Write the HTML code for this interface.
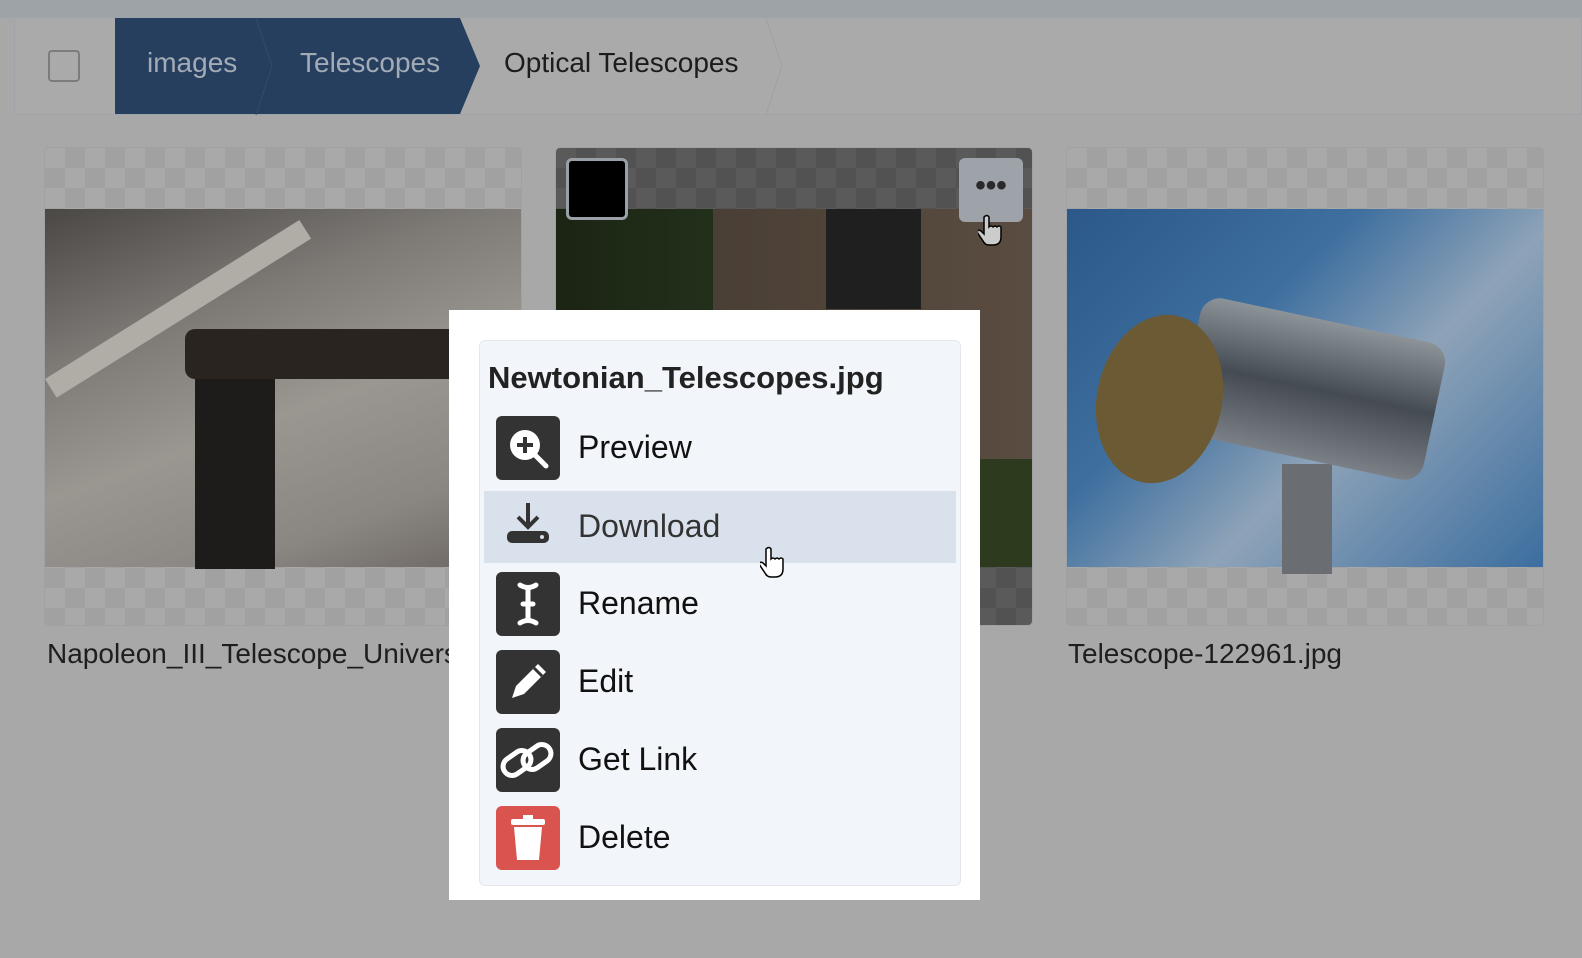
<!DOCTYPE html>
<html><head><meta charset="utf-8"><style>
*{margin:0;padding:0;box-sizing:border-box}
body{width:1582px;height:958px;background:#a8a8a8;font-family:"Liberation Sans",sans-serif;position:relative;overflow:hidden}
.abs{position:absolute}
.top{left:0;top:0;width:1582px;height:18px;background:#9ea3a8}
.bc{left:14px;top:18px;width:1568px;height:97px;border:1px solid #9fa4aa;border-top:none;background:#aaaaaa}
.cb{left:48px;top:50px;width:32px;height:32px;border:2px solid #7c7c7c;border-radius:4px}
.blue{left:115px;top:18px;width:365px;height:96px;background:#273f5f;clip-path:polygon(0 0,345px 0,365px 48px,345px 96px,0 96px)}
.bt{top:47px;font-size:28px;color:#a3abb6}
.card{top:147px;width:478px;height:479px;border:1px solid #9ea2a7;border-radius:5px;overflow:hidden;
background-color:#a9a9a9;background-image:linear-gradient(45deg,#a1a1a1 25%,transparent 25%,transparent 75%,#a1a1a1 75%),linear-gradient(45deg,#a1a1a1 25%,transparent 25%,transparent 75%,#a1a1a1 75%);background-size:40px 40px;background-position:0 0,20px 20px}
.img{position:absolute;left:0;top:61px;width:100%;height:358px}
.fn{top:638px;font-size:28px;color:#1e1e1e}
.pop{left:449px;top:310px;width:531px;height:590px;background:#fff}
.panel{left:479px;top:340px;width:482px;height:546px;background:#f2f5f9;border:1px solid #e4e8ee;border-radius:6px}
.ttl{left:488px;top:360px;font-size:31px;font-weight:bold;color:#222}
.item{left:484px;width:472px;height:72px}
.ic{position:absolute;left:12px;top:4px;width:64px;height:64px;border-radius:6px;background:#333}
.lb{position:absolute;left:94px;top:17px;font-size:32px;color:#111}
</style></head><body>
<div class="abs top"></div>
<div class="abs bc"></div>
<div class="abs cb"></div>
<div class="abs blue"></div>
<svg class="abs" style="left:250px;top:18px" width="30" height="97"><path d="M6 0 L22 48 L6 97" stroke="#334b6b" fill="none"/></svg>
<svg class="abs" style="left:760px;top:18px" width="30" height="97"><path d="M6 0 L22 48 L6 97" stroke="#a0a0a0" fill="none"/></svg>
<div class="abs bt" style="left:147px">images</div>
<div class="abs bt" style="left:300px">Telescopes</div>
<div class="abs bt" style="left:504px;color:#1c1c1c">Optical Telescopes</div>

<div class="abs card" style="left:44px">
 <div class="img" style="background:linear-gradient(160deg,#4a4744 0%,#7d7a76 30%,#9a9690 55%,#8a8682 80%,#6a6460 100%)">
  <div style="position:absolute;left:150px;top:150px;width:80px;height:210px;background:#1e1c1a"></div>
  <div style="position:absolute;left:0;top:170px;width:300px;height:22px;background:#b0aca6;transform:rotate(-32deg);transform-origin:0 0"></div>
  <div style="position:absolute;left:140px;top:120px;width:340px;height:50px;background:#2a2420;border-radius:10px"></div>
 </div>
</div>
<div class="abs card" style="left:555px;background-color:#5a5a5a;background-image:linear-gradient(45deg,#525252 25%,transparent 25%,transparent 75%,#525252 75%),linear-gradient(45deg,#525252 25%,transparent 25%,transparent 75%,#525252 75%)">
 <div class="img" style="background:linear-gradient(90deg,#1c2414 0,#22301a 33%,#4a3f35 33%,#5a4c40 100%)">
  <div style="position:absolute;left:270px;top:0;width:95px;height:100px;background:#1f1f1f"></div>
  <div style="position:absolute;left:158px;top:250px;width:320px;height:108px;background:#2d3a1e"></div>
 </div>
</div>
<div class="abs card" style="left:1066px">
 <div class="img" style="background:linear-gradient(135deg,#2b5888 0%,#3e6f9f 35%,#8ea3b8 60%,#3c6e9f 100%)">
  <div style="position:absolute;left:215px;top:255px;width:50px;height:110px;background:#6a6e72"></div>
  <div style="position:absolute;left:120px;top:110px;width:250px;height:140px;background:linear-gradient(#8c949a,#454b52,#7a8086);border-radius:20px;transform:rotate(12deg)"></div>
  <div style="position:absolute;left:30px;top:105px;width:125px;height:170px;background:#6b5a33;border-radius:50%;transform:rotate(12deg)"></div>
 </div>
</div>
<div class="abs" style="left:566px;top:158px;width:62px;height:62px;background:#000;border:3px solid #9aa0a7;border-radius:6px"></div>
<div class="abs" style="left:959px;top:158px;width:64px;height:64px;background:#9ea3aa;border-radius:6px;text-align:center;font-size:30px;line-height:56px;color:#2a2a2a;font-weight:bold">•••</div>

<div class="abs fn" style="left:47px">Napoleon_III_Telescope_Univers</div>
<div class="abs fn" style="left:1068px">Telescope-122961.jpg</div>

<div class="abs pop"></div>
<div class="abs panel"></div>
<div class="abs ttl">Newtonian_Telescopes.jpg</div>

<div class="abs item" style="top:412px"><div class="ic"><svg width="64" height="64"><circle cx="29" cy="29" r="15" fill="#fff"/><path d="M39 39 L50 50" stroke="#fff" stroke-width="5" stroke-linecap="round"/><path d="M29 21v16M21 29h16" stroke="#333" stroke-width="4"/></svg></div><div class="lb">Preview</div></div>
<div class="abs item" style="top:491px;background:#d9e2ec"><div class="ic" style="background:none"><svg width="64" height="64"><path d="M32 8v22" stroke="#333" stroke-width="4"/><path d="M22 22l10 10 10-10" stroke="#333" stroke-width="4" fill="none"/><rect x="11" y="36" width="42" height="12" rx="5" fill="#333"/><circle cx="46" cy="42" r="2" fill="#d9e2ec"/></svg></div><div class="lb" style="color:#333">Download</div></div>
<div class="abs item" style="top:568px"><div class="ic"><svg width="64" height="64"><path d="M24 13 Q32 18 40 13 M32 16v32 M24 51 Q32 46 40 51 M27 32h10" stroke="#fff" stroke-width="5" fill="none" stroke-linecap="round"/></svg></div><div class="lb">Rename</div></div>
<div class="abs item" style="top:646px"><div class="ic"><svg width="64" height="64"><path d="M16 48 L20 36 L42 14 L50 22 L28 44 Z" fill="#fff"/><path d="M38 18l8 8" stroke="#333" stroke-width="3"/></svg></div><div class="lb">Edit</div></div>
<div class="abs item" style="top:724px"><div class="ic"><svg width="64" height="64"><rect x="6" y="26" width="30" height="18" rx="9" transform="rotate(-35 21 35)" fill="none" stroke="#fff" stroke-width="5"/><rect x="26" y="20" width="30" height="18" rx="9" transform="rotate(-35 41 29)" fill="none" stroke="#fff" stroke-width="5"/></svg></div><div class="lb">Get Link</div></div>
<div class="abs item" style="top:802px"><div class="ic" style="background:#d9534f"><svg width="64" height="64"><rect x="15" y="13" width="34" height="6" rx="2" fill="#fff"/><rect x="27" y="9" width="10" height="5" fill="#fff"/><path d="M18 21h28l-3 33H21z" fill="#fff"/></svg></div><div class="lb">Delete</div></div>

<svg class="abs" style="left:760px;top:545px" width="30" height="36"><path d="M6 4 q3-3 5 0 v10 q2-2 4 0 q2-2 4 0 q2-2 4 0 v10 q0 8-8 8 h-4 q-4 0-6-4 l-6-9 q1-3 4-1 l3 3z" fill="#fff" stroke="#000" stroke-width="1.5"/></svg>
<svg class="abs" style="left:978px;top:213px" width="30" height="36"><path d="M6 4 q3-3 5 0 v10 q2-2 4 0 q2-2 4 0 q2-2 4 0 v10 q0 8-8 8 h-4 q-4 0-6-4 l-6-9 q1-3 4-1 l3 3z" fill="#ccc" stroke="#000" stroke-width="1.5"/></svg>
</body></html>
